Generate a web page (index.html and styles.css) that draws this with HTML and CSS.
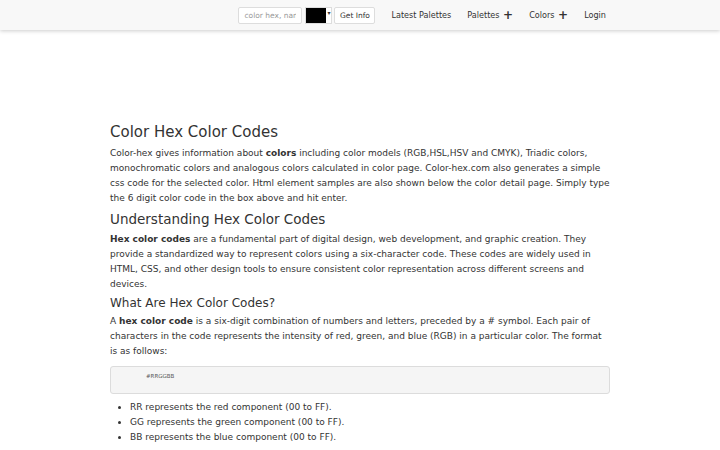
FILE: index.html
```html
<!DOCTYPE html>
<html>
<head>
	<title>Color Hex Color Codes</title>
	<link rel="stylesheet" href="styles.css">
</head>
<body>
	<div class="navbar">
		<div class="navInner">
			<form class="colorForm">
				<input class="hexInput" type="text" placeholder="color hex, name">
				<span class="swatch"><span class="swatchFill"></span><span class="caret">&#9662;</span></span>
				<button type="button" class="getInfo">Get Info</button>
			</form>
			<ul class="navLinks">
				<li><a href="#">Latest Palettes</a></li>
				<li><a href="#">Palettes <span class="plus">+</span></a></li>
				<li><a href="#">Colors <span class="plus">+</span></a></li>
				<li><a href="#">Login</a></li>
			</ul>
		</div>
	</div>

	<div class="adSpace"></div>

	<div class="content">
		<h1>Color Hex Color Codes</h1>
		<p>Color-hex gives information about <b>colors</b> including color models (RGB,HSL,HSV and CMYK), Triadic colors, monochromatic colors and analogous colors calculated in color page. Color-hex.com also generates a simple css code for the selected color. Html element samples are also shown below the color detail page. Simply type the 6 digit color code in the box above and hit enter.</p>

		<h2>Understanding Hex Color Codes</h2>
		<p><b>Hex color codes</b> are a fundamental part of digital design, web development, and graphic creation. They provide a standardized way to represent colors using a six-character code. These codes are widely used in HTML, CSS, and other design tools to ensure consistent color representation across different screens and devices.</p>

		<h3>What Are Hex Color Codes?</h3>
		<p>A <b>hex color code</b> is a six-digit combination of numbers and letters, preceded by a # symbol. Each pair of characters in the code represents the intensity of red, green, and blue (RGB) in a particular color. The format is as follows:</p>

		<pre class="code">#RRGGBB</pre>

		<ul class="parts">
			<li>RR represents the red component (00 to FF).</li>
			<li>GG represents the green component (00 to FF).</li>
			<li>BB represents the blue component (00 to FF).</li>
		</ul>
	</div>
</body>
</html>
```

FILE: styles.css
```css
body{
	margin: 0;
	font-family: "DejaVu Sans", Verdana, sans-serif;
	font-size: 9px;
	line-height: 15px;
	color: #333;
	background: #fff;
}
.navbar{
	height: 30px;
	background-color: #f8f8f8;
	box-shadow: 0 1px 4px rgba(0,0,0,0.2);
}
.navInner{
	width: 500px;
	margin: 0 auto;
	height: 100%;
	display: flex;
	justify-content: flex-end;
	align-items: center;
}
.colorForm{
	display: flex;
	align-items: center;
	margin: 0;
}
.hexInput{
	width: 64px;
	height: 17px;
	box-sizing: border-box;
	border: 1px solid #ddd;
	border-radius: 2px;
	padding: 0 5px;
	font-family: inherit;
	font-size: 7.5px;
	color: #555;
}
.hexInput::placeholder{
	color: #999;
}
.swatch{
	display: flex;
	align-items: flex-start;
	margin-left: 3px;
	height: 17px;
	width: 27px;
	box-sizing: border-box;
	border: 1px solid #ddd;
	background: #fff;
}
.swatchFill{
	width: 20px;
	height: 100%;
	background: #000;
}
.caret{
	font-size: 6px;
	line-height: 9px;
	color: #333;
	margin-left: 1px;
}
.getInfo{
	margin-left: 2px;
	height: 17px;
	width: 41px;
	padding: 0;
	border: 1px solid #ddd;
	border-radius: 2px;
	background: #fff;
	font-family: inherit;
	font-size: 7.5px;
	color: #333;
}
.navLinks{
	list-style: none;
	margin: 0 -4px 0 8px;
	padding: 0;
	display: flex;
}
.navLinks li a{
	display: block;
	padding: 0 8px;
	color: #333;
	text-decoration: none;
	font-size: 8.1px;
}
.plus{
	font-size: 12px;
	font-weight: bold;
	vertical-align: -1px;
	margin-left: 1px;
}
.adSpace{
	height: 91px;
}
.content{
	width: 500px;
	margin: 0 auto;
}
h1, h2, h3{
	font-weight: normal;
	color: #333;
	margin: 0;
}
h1{
	font-size: 15px;
	line-height: 22px;
	margin-bottom: 3px;
}
h2{
	font-size: 13.5px;
	line-height: 18px;
	margin-bottom: 4px;
}
h3{
	font-size: 12px;
	line-height: 14px;
	margin-bottom: 4px;
}
p{
	margin: 0 0 4px;
}
.code{
	margin: 7px 0 6px;
	padding: 5px 8px 12px 35px;
	background: #f5f5f5;
	border: 1px solid #dcdcdc;
	border-radius: 3px;
	font-family: "DejaVu Sans", sans-serif;
	font-size: 5.5px;
	line-height: 9px;
	color: #555;
}
.parts{
	margin: 0;
	padding-left: 20px;
}
```
